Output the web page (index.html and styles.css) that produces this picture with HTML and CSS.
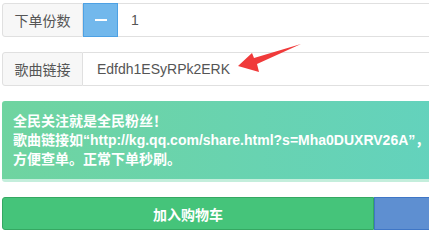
FILE: index.html
```html
<!DOCTYPE html>
<html>
<head>
<meta charset="utf-8">
<link rel="stylesheet" href="styles.css">
</head>
<body>
<div class="wrap">
  <div class="group">
    <span class="addon">下单份数</span>
    <span class="minus"><span class="bar"></span></span>
    <span class="field qty">1</span>
  </div>
  <div class="group second">
    <span class="addon">歌曲链接</span>
    <span class="field link">Edfdh1ESyRPk2ERK</span>
    <svg class="arrow" width="80" height="40" viewBox="0 0 80 40">
      <polygon points="3,24 17,11 19,16 66,2 22,22 24,30" fill="#f03a3a"/>
    </svg>
  </div>
  <div class="alert">
    全民关注就是全民粉丝！<br>
    歌曲链接如“http://kg.qq.com/share.html?s=Mha0DUXRV26A”，<br>
    方便查单。正常下单秒刷。
  </div>
  <div class="actions">
    <span class="btn green">加入购物车</span>
    <span class="btn blue"></span>
  </div>
</div>
</body>
</html>
```

FILE: styles.css
```css
html, body {
  margin: 0;
  padding: 0;
  overflow: hidden;
  background: #fff;
}
.wrap {
  width: 480px;
  padding: 3px 0 0 2px;
  font-family: "Liberation Sans", "Noto Sans CJK SC", sans-serif;
  font-size: 14px;
  color: #555;
}
.group {
  display: flex;
  height: 34px;
  position: relative;
}
.second {
  margin-top: 15px;
}
.addon {
  box-sizing: border-box;
  width: 81px;
  display: flex;
  align-items: center;
  justify-content: center;
  background: #f7f7f7;
  border: 1px solid #e0e0e0;
  border-radius: 3px 0 0 3px;
  color: #555;
}
.minus {
  box-sizing: border-box;
  width: 35px;
  display: flex;
  align-items: center;
  justify-content: center;
  background: #72b8ec;
  border: 1px solid #4da1e4;
}
.bar {
  width: 12px;
  height: 2px;
  background: #fff;
}
.field {
  flex: 1;
  box-sizing: border-box;
  display: flex;
  align-items: center;
  border: 1px solid #e0e0e0;
  border-left: none;
}
.qty {
  padding-left: 13px;
}
.link {
  padding-left: 14px;
}
.arrow {
  position: absolute;
  left: 233px;
  top: -10px;
}
.alert {
  margin-top: 15px;
  padding: 11px 11px 10px;
  line-height: 19px;
  font-size: 14px;
  font-weight: bold;
  color: #fff;
  white-space: nowrap;
  background: linear-gradient(to right, #6fd4a0, #62d2c0);
  border-bottom: 3px solid #c4eedc;
  border-radius: 3px;
}
.actions {
  display: flex;
  margin-top: 15px;
}
.btn {
  box-sizing: border-box;
  height: 33px;
  display: flex;
  align-items: center;
  justify-content: center;
  font-weight: bold;
  color: #fff;
  font-size: 14px;
}
.green {
  width: 372px;
  background: #45c47a;
  border: 1px solid #35a862;
  border-radius: 3px 0 0 3px;
}
.blue {
  flex: 1;
  background: #5e8fd1;
  border: 1px solid #3f76c6;
}
```
